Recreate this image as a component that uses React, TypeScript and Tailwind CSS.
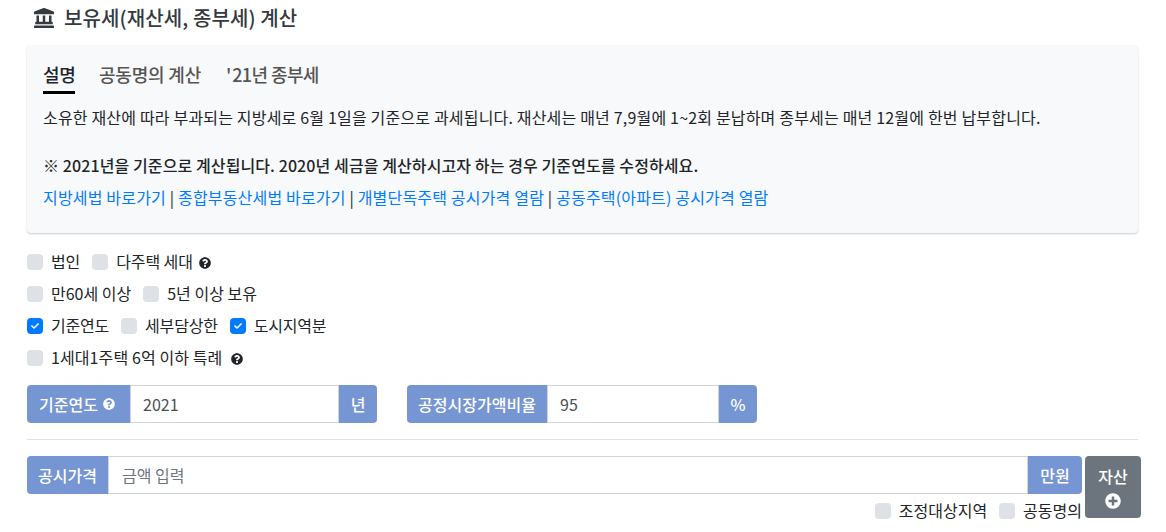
import { FaCheck, FaQuestionCircle, FaPlusCircle, FaLandmark } from "react-icons/fa";

const font = { fontFamily: '"Noto Sans CJK KR", "Noto Sans", sans-serif' };

function Check({ label, checked, help, helpClass }: { label: string; checked?: boolean; help?: boolean; helpClass?: string }) {
  return (
    <label className="flex items-center mr-[12px]">
      <span className={`w-4 h-4 rounded-[4px] flex items-center justify-center mr-2 ${checked ? "bg-[#007bff]" : "bg-[#dee2e6]"}`}>
        {checked && <FaCheck className="text-white w-2 h-2" />}
      </span>
      <span>{label}</span>
      {help && <FaQuestionCircle className={`w-3 h-3 text-[#212529] ${helpClass ?? "ml-[6px]"} mt-[2px]`} />}
    </label>
  );
}

function Link({ children }: { children: string }) {
  return <a className="text-[#007bff]">{children}</a>;
}

export default function App() {
  return (
    <div style={font} className="w-[1166px] h-[532px] overflow-hidden bg-white text-[16px] text-[#212529] px-[27px] relative">
      <h1 className="flex items-center h-[35px] text-[20px] font-medium ml-[7px] text-[#343a40] tracking-[0.1px]">
        <FaLandmark className="w-5 h-5 mr-[10px]" />
        보유세(재산세, 종부세) 계산
      </h1>
      <div className="mt-[10px] w-[1111px] h-[188px] bg-[#f8f9fa] rounded-[4px] shadow-[0_1px_2px_rgba(0,0,0,0.2)] px-[16px]">
        <div className="flex pt-[14px] text-[18px] font-medium h-[49px] leading-[30px] tracking-[-0.2px]">
          <div className="border-b-[3px] border-black text-[#212529] h-[35px] w-[32px] whitespace-nowrap">설명</div>
          <div className="ml-[24px] text-[#555]">공동명의 계산</div>
          <div className="ml-[25px] text-[#555]">'<span className="ml-[1px] tracking-[-0.6px]">21년 종부세</span></div>
        </div>
        <p className="mt-[13px] leading-[21px] tracking-[0.18px] whitespace-nowrap">소유한 재산에 따라 부과되는 지방세로 6월 1일을 기준으로 과세됩니다. 재산세는 매년 7,9월에 1~2회 분납하며 종부세는 매년 12월에 한번 납부합니다.</p>
        <p className="mt-[27px] font-medium leading-[21px] tracking-[0.1px] whitespace-nowrap">※ 2021년을 기준으로 계산됩니다. 2020년 세금을 계산하시고자 하는 경우 기준연도를 수정하세요.</p>
        <p className="mt-[11px] leading-[21px] tracking-[0.18px] whitespace-nowrap">
          <Link>지방세법 바로가기</Link> | <Link>종합부동산세법 바로가기</Link> | <Link>개별단독주택 공시가격 열람</Link> | <Link>공동주택(아파트) 공시가격 열람</Link>
        </p>
      </div>
      <div className="mt-[18px] flex flex-col gap-[11px] leading-[21px]">
        <div className="flex h-[21px] tracking-[-0.1px]"><Check label="법인" /><Check label="다주택 세대" help /></div>
        <div className="flex h-[21px]"><Check label="만60세 이상" /><Check label="5년 이상 보유" /></div>
        <div className="flex h-[21px] tracking-[-0.2px]"><Check label="기준연도" checked /><Check label="세부담상한" /><Check label="도시지역분" checked /></div>
        <div className="flex h-[21px] tracking-[0.1px]"><Check label="1세대1주택 6억 이하 특례" help helpClass="ml-[9px]" /></div>
      </div>
      <div className="mt-[17px] flex gap-[30px] h-[38px]">
        <div className="flex w-[350px]">
          <div className="flex items-center px-[12px] bg-[#7695d3] text-white rounded-l-[4px] font-medium w-[103px] whitespace-nowrap">기준연도<FaQuestionCircle className="w-3 h-3 ml-[5px] text-white" /></div>
          <div className="flex-1 flex items-center px-[12px] border border-[#ced4da] text-[#495057]">2021</div>
          <div className="flex items-center justify-center bg-[#7695d3] text-white rounded-r-[4px] font-medium w-[38px]">년</div>
        </div>
        <div className="flex w-[350px]">
          <div className="flex items-center justify-center bg-[#7695d3] text-white rounded-l-[4px] font-medium w-[140px] whitespace-nowrap">공정시장가액비율</div>
          <div className="flex-1 flex items-center px-[12px] border border-[#ced4da] text-[#495057]">95</div>
          <div className="flex items-center justify-center bg-[#7695d3] text-white rounded-r-[4px] font-medium w-[38px]">%</div>
        </div>
      </div>
      <hr className="mt-[16px] w-[1111px] border-[#dee2e6]" />
      <div className="mt-[16px] flex items-start w-[1114px]">
        <div className="flex-1">
          <div className="flex h-[38px]">
            <div className="flex items-center justify-center bg-[#7695d3] text-white rounded-l-[4px] font-medium w-[81px] whitespace-nowrap">공시가격</div>
            <div className="flex-1 flex items-center px-[13px] border border-[#ced4da] text-[#6c757d]">금액 입력</div>
            <div className="flex items-center justify-center bg-[#7695d3] text-white rounded-r-[4px] font-medium w-[54px]">만원</div>
          </div>
          <div className="flex justify-end mt-[6px] leading-[21px]">
            <Check label="조정대상지역" />
            <label className="flex items-center"><span className="w-4 h-4 rounded-[4px] bg-[#dee2e6] mr-2" />공동명의</label>
          </div>
        </div>
        <div className="ml-[3px] w-[56px] h-[62px] bg-[#6c757d] text-white rounded-[4px] flex flex-col items-center pt-[8px] font-medium">
          <span className="leading-[24px]">자산</span>
          <FaPlusCircle className="w-4 h-4 mt-[5px]" />
        </div>
      </div>
    </div>
  );
}
